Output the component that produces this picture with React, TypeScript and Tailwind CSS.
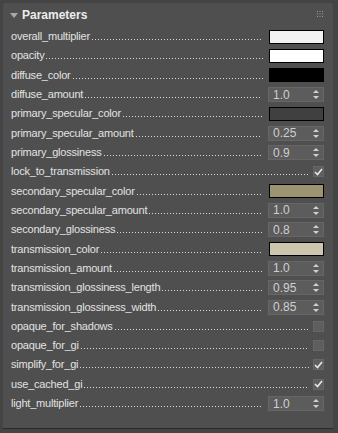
import React from "react";

type Row =
  | { label: string; kind: "swatch"; color: string }
  | { label: string; kind: "spin"; value: string }
  | { label: string; kind: "check"; checked: boolean };

const rows: Row[] = [
  { label: "overall_multiplier", kind: "swatch", color: "#f2f2f2" },
  { label: "opacity", kind: "swatch", color: "#ffffff" },
  { label: "diffuse_color", kind: "swatch", color: "#000000" },
  { label: "diffuse_amount", kind: "spin", value: "1.0" },
  { label: "primary_specular_color", kind: "swatch", color: "#404040" },
  { label: "primary_specular_amount", kind: "spin", value: "0.25" },
  { label: "primary_glossiness", kind: "spin", value: "0.9" },
  { label: "lock_to_transmission", kind: "check", checked: true },
  { label: "secondary_specular_color", kind: "swatch", color: "#9c9470" },
  { label: "secondary_specular_amount", kind: "spin", value: "1.0" },
  { label: "secondary_glossiness", kind: "spin", value: "0.8" },
  { label: "transmission_color", kind: "swatch", color: "#cdc6ae" },
  { label: "transmission_amount", kind: "spin", value: "1.0" },
  { label: "transmission_glossiness_length", kind: "spin", value: "0.95" },
  { label: "transmission_glossiness_width", kind: "spin", value: "0.85" },
  { label: "opaque_for_shadows", kind: "check", checked: false },
  { label: "opaque_for_gi", kind: "check", checked: false },
  { label: "simplify_for_gi", kind: "check", checked: true },
  { label: "use_cached_gi", kind: "check", checked: true },
  { label: "light_multiplier", kind: "spin", value: "1.0" },
];

function Spinner({ value }: { value: string }) {
  return (
    <div className="w-[56px] h-[15px] bg-[#5c5c5c] border border-[#666666] flex items-center justify-between pl-[4px] pr-[4px]">
      <span className="text-[12px] leading-none text-[#cfcfcf]">{value}</span>
      <svg width="6" height="9" viewBox="0 0 6 9">
        <path d="M3 0 L6 3 L0 3 Z" fill="#d0d0d0" />
        <path d="M0 6 L6 6 L3 9 Z" fill="#d0d0d0" />
      </svg>
    </div>
  );
}

function Check({ checked }: { checked: boolean }) {
  return (
    <div className="w-[11px] h-[11px] bg-[#5e5e5e] border border-[#666666] flex items-center justify-center">
      {checked && (
        <svg width="9" height="8" viewBox="0 0 9 8">
          <path d="M1 4 L3.5 6.5 L8 1" stroke="#e8e8e8" strokeWidth="1.6" fill="none" />
        </svg>
      )}
    </div>
  );
}

export default function App() {
  return (
    <div
      className="w-[338px] h-[433px] bg-[#444444] pt-[3px] pl-[3px] pr-[5px]"
      style={{ fontFamily: '"Liberation Sans", Arial, sans-serif' }}
    >
      <div className="h-[426px] bg-[#4f4f4f] rounded-t-[3px] border-b border-[#2a2a2a] flex flex-col">
        <div className="h-[24px] flex items-center pl-[7px] pr-[8px] relative">
          <svg width="8" height="5" viewBox="0 0 8 5" className="mr-[4px]">
            <path d="M0 0 L8 0 L4 5 Z" fill="#a8a8a8" />
          </svg>
          <span className="text-[12px] font-bold text-[#ececec] leading-none">Parameters</span>
          <svg width="6" height="6" viewBox="0 0 6 6" className="absolute right-[10px] top-[8px]">
            {[0, 2.5, 5].map((y) =>
              [0, 2.5, 5].map((x) => (
                <rect key={`${x}-${y}`} x={x} y={y} width="1" height="1" fill="#9a9a9a" />
              ))
            )}
          </svg>
        </div>
        <div className="flex flex-col pl-[8px] pr-[9px]">
          {rows.map((r) => (
            <div key={r.label} className="h-[19.32px] flex items-center">
              <span className="text-[11px] tracking-[-0.2px] text-[#e2e2e2] whitespace-nowrap leading-none mr-[2px]">
                {r.label}
              </span>
              <div
                className={`flex-1 h-[1px] mt-[6px] bg-[linear-gradient(to_right,#dadada_1px,transparent_1px)] bg-[length:3px_1px] bg-repeat-x ${
                  r.kind === "check" ? "mr-[4px]" : "mr-[6px]"
                }`}
              />
              {r.kind === "swatch" && (
                <div className="w-[55px] h-[14px] border border-black" style={{ backgroundColor: r.color }} />
              )}
              {r.kind === "spin" && <Spinner value={r.value} />}
              {r.kind === "check" && <Check checked={r.checked} />}
            </div>
          ))}
        </div>
      </div>
    </div>
  );
}
